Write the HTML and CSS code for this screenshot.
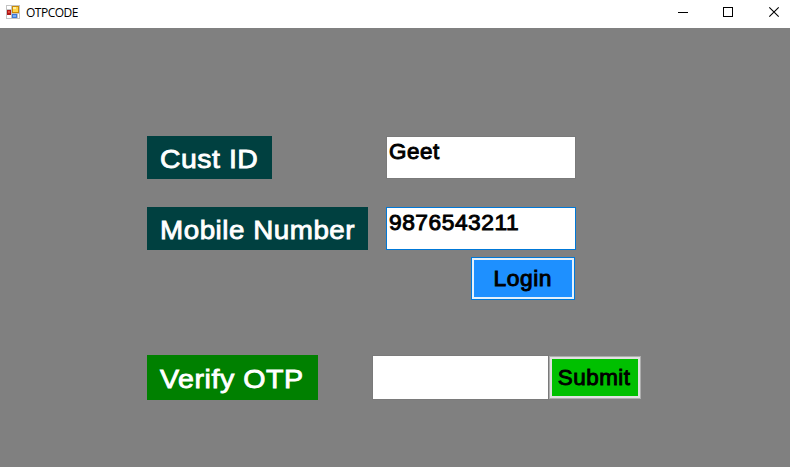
FILE: index.html
```html
<!DOCTYPE html>
<html lang="en">
<head>
<meta charset="utf-8">
<title>OTPCODE</title>
<link rel="stylesheet" href="styles.css">
</head>
<body>
<header class="titlebar">
  <svg class="app-icon" width="14" height="14" viewBox="0 0 14 14" shape-rendering="crispEdges">
    <path fill="#c3c3c3" d="M0 0h14v14H0z"/>
    <path fill="#fff" d="M1 1h4v3H1zM1 10h4v3H1zM12 9h1v4h-1z"/>
    <path fill="#b01818" d="M1 5h4v5H1z"/>
    <path fill="#e24a3a" d="M2 6h2v2H2z"/>
    <path fill="#c98a08" d="M6 1h7v7H6z"/>
    <path fill="#ffd54a" d="M7 2h5v5H7z"/>
    <path fill="#fff0a0" d="M7 2h3v2H7z"/>
    <path fill="#3c78d8" d="M6 9h5v4H6z"/>
    <path fill="#78acf5" d="M7 10h3v2H7z"/>
  </svg>
  <span class="title">OTPCODE</span>
  <svg class="controls" width="102" height="12" viewBox="0 0 102 12" fill="none" stroke="#000">
    <path d="M0 6.5h10M45.5 1.5h9v9h-9z" shape-rendering="crispEdges"/>
    <path d="M91.3 1.3l9.4 9.4M100.7 1.3l-9.4 9.4" stroke-width="1.1"/>
  </svg>
</header>
<main class="form">
  <div class="row">
    <div class="label cust"><span>Cust ID</span></div>
    <div class="field"><span class="geet">Geet</span></div>
  </div>
  <div class="row mobile-row">
    <div class="label mobile"><span>Mobile Number</span></div>
    <div class="field focused"><span class="digits">9876543211</span></div>
  </div>
  <div class="login-row">
    <button class="button login"><span>Login</span></button>
  </div>
  <div class="row otp-row">
    <div class="label verify"><span>Verify OTP</span></div>
    <div class="field otp"></div>
    <button class="button submit"><span>Submit</span></button>
  </div>
</main>
</body>
</html>
```
FILE: styles.css
```css
* { box-sizing: border-box; }
body {
  margin: 0;
  height: 467px;
  display: flex;
  flex-direction: column;
  overflow: hidden;
  background: #808080;
  font-family: "Liberation Sans", Arial, sans-serif;
}
.titlebar {
  height: 28px;
  flex: none;
  display: flex;
  align-items: center;
  padding: 0 10px 3px 6px;
  background: #fff;
}
.app-icon { margin-top: -1px; }
.title {
  margin-left: 6px;
  font: 12px/16px "Open Sans", "Noto Sans", sans-serif;
  letter-spacing: -0.5px;
  color: #000;
}
.controls { margin: -2px 0 0 auto; }
.form { padding: 108px 0 0 147px; width: 641px; }
.row { display: flex; justify-content: space-between; width: 429px; }
.mobile-row { margin-top: 28px; }
.label {
  height: 43px;
  padding-left: 12.5px;
  background: #004040;
  color: #fff;
  font-size: 26.67px;
  line-height: 46px;
  letter-spacing: 0.5px;
  white-space: nowrap;
  -webkit-text-stroke: 0.85px #fff;
}
.label span, .field span { display: inline-block; transform-origin: 0 50%; }
.button span { display: inline-block; }
.cust { width: 125px; }
.cust span { transform: scaleX(1.065); }
.mobile { width: 221px; }
.mobile span { transform: scaleX(1.042); }
.verify { width: 171px; height: 45px; padding-left: 13px; line-height: 48px; background: #008000; }
.verify span { transform: scaleX(1.073); }
.field {
  width: 190px;
  height: 43px;
  padding-left: 2px;
  border: 1px solid #7a7a7a;
  background: #fff;
  color: #000;
  font-size: 21.33px;
  line-height: 30px;
  letter-spacing: 0.5px;
  -webkit-text-stroke: 0.9px #000;
}
.focused { border-color: #0078d7; }
.geet { transform: scaleX(1.05); }
.digits { transform: scaleX(1.066); }
.login-row { display: flex; justify-content: flex-end; width: 428px; margin-top: 7px; }
.button {
  height: 43px;
  padding: 0;
  border: 1px solid #0078d7;
  box-shadow: inset 0 0 0 2px #e5f1fb;
  background: #1e90ff;
  color: #000;
  font: 21.33px/40px "Liberation Sans", Arial, sans-serif;
  letter-spacing: 0.5px;
  -webkit-text-stroke: 0.9px #000;
}
.login { width: 104px; }
.login span { transform: translateX(-0.5px) scaleX(1.07); }
.otp-row { width: 494px; margin-top: 55px; justify-content: flex-start; }
.otp { width: 177px; height: 45px; margin-left: 54px; }
.submit {
  width: 92px;
  margin: 1px 0 0;
  border-color: #adadad;
  box-shadow: inset 0 0 0 2px #e1e1e1;
  background: #00c000;
}
.submit span { transform: translateX(-0.5px) scaleX(1.05); }
```
